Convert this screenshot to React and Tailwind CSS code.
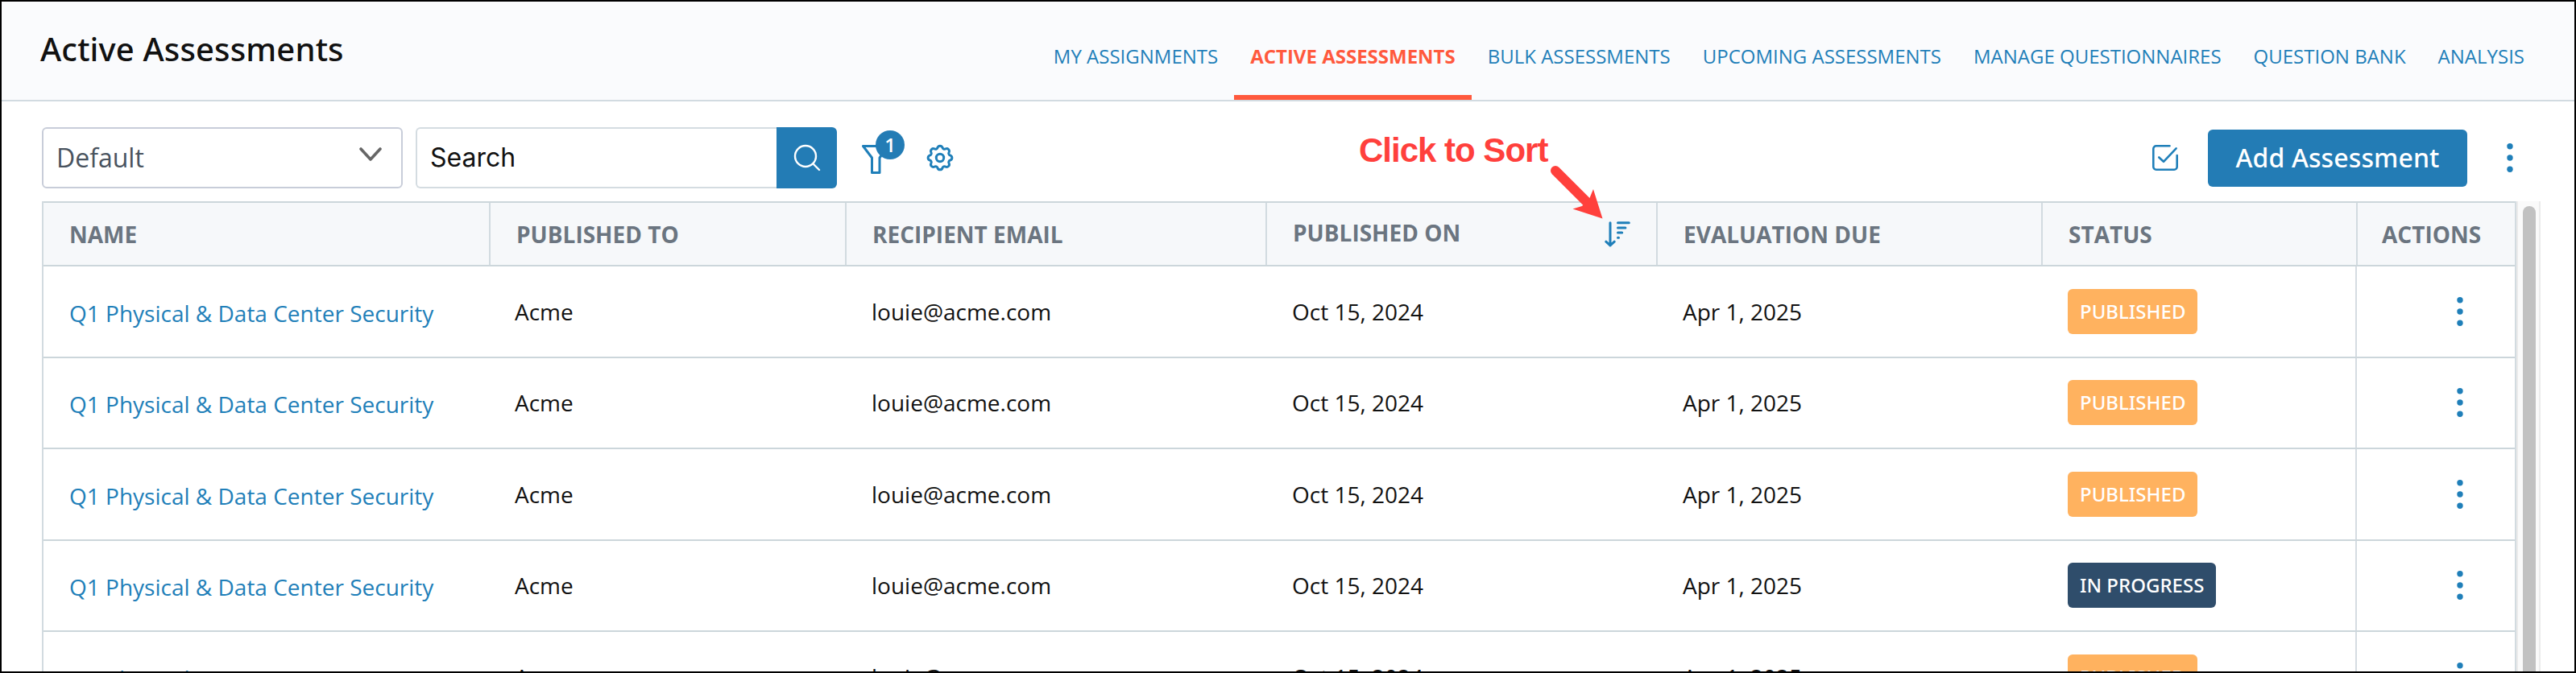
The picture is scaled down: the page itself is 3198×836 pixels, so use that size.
const TABS = [
  "My Assignments",
  "Active Assessments",
  "Bulk Assessments",
  "Upcoming Assessments",
  "Manage Questionnaires",
  "Question Bank",
  "Analysis",
];

const STATUS_STYLES = {
  Published: "bg-[#ffb25f]",
  "In Progress": "bg-[#2f4d6b]",
};

const row = (id, status) => ({
  id,
  name: "Q1 Physical & Data Center Security",
  publishedTo: "Acme",
  email: "louie@acme.com",
  publishedOn: "Oct 15, 2024",
  due: "Apr 1, 2025",
  status,
});

const ROWS = [
  row(1, "Published"),
  row(2, "Published"),
  row(3, "Published"),
  row(4, "In Progress"),
  row(5, "Published"),
];

const GRID =
  "grid grid-cols-[555px_442px_522px_485px_478px_391px_195px]";

// Open Sans has no medium weight installed, Noto Sans has
const MEDIUM = "font-['Noto_Sans',sans-serif] font-medium";

// Outline of a gear with eight rounded teeth, centred on 18,18
function gearPath() {
  const at = (deg) => {
    const a = (deg * Math.PI) / 180;
    return `${(18 + 13.2 * Math.cos(a)).toFixed(2)} ${(18 + 13.2 * Math.sin(a)).toFixed(2)}`;
  };
  let d = `M${at(-13)}`;
  for (let k = 0; k < 8; k++) {
    d += `A3.2 3.2 0 0 1 ${at(k * 45 + 13)}A2.6 2.6 0 0 0 ${at(k * 45 + 32)}`;
  }
  return d + "Z";
}

function Kebab() {
  return (
    <svg className="w-2 h-9 shrink-0" viewBox="0 0 8 36" fill="#1f7fb9">
      <circle cx="4" cy="3.8" r="3.7" />
      <circle cx="4" cy="18" r="3.7" />
      <circle cx="4" cy="32.2" r="3.7" />
    </svg>
  );
}

function SortIcon() {
  return (
    <svg
      className="w-8 h-8"
      viewBox="0 0 32 32"
      fill="none"
      stroke="#1f7fb9"
      strokeWidth="3"
      strokeLinecap="round"
      strokeLinejoin="round"
    >
      <path d="M7 1.7V30M1.8 25.2L7 30l5.2-4.8M16.5 1.7h13.8M16.5 7.9h9.4M16.5 14.1h5.2M16.5 20.3h1" />
    </svg>
  );
}

function Header() {
  return (
    <header className="flex justify-between h-[124px] bg-[#fafbfd] border-b-2 border-[#d2dbe1] pl-12 pr-[42px]">
      <h1
        className={`mt-[31px] text-[40px] leading-[56px] tracking-[0.15px] text-[#111] ${MEDIUM}`}
      >
        Active Assessments
      </h1>
      <nav className="flex text-2xl">
        {TABS.map((tab) => (
          <a
            key={tab}
            className={
              tab === "Active Assessments"
                ? "px-5 pt-[52px] uppercase font-bold text-[#ff593d] border-b-6 border-[#ff593d]"
                : "px-5 pt-[52px] uppercase text-[#1f7fb9]"
            }
          >
            {tab}
          </a>
        ))}
      </nav>
    </header>
  );
}

function Toolbar() {
  return (
    <div className="flex items-center h-[76px] mt-8 pl-[50px] pr-[76px]">
      <div className="flex items-center justify-between w-[448px] h-[76px] border-2 border-[#c8cdd9] rounded-md pl-4 pr-6 text-[32px] text-[#49535e]">
        Default
        <svg
          className="w-7 h-5 mb-2"
          viewBox="0 0 28 20"
          fill="none"
          stroke="#666"
          strokeWidth="3.6"
          strokeLinecap="round"
          strokeLinejoin="round"
        >
          <path d="M2 3l12 13L26 3" />
        </svg>
      </div>

      <div className="flex w-[523px] h-[76px] ml-4">
        <div className="flex items-center grow border-2 border-r-0 border-[#d4dce1] rounded-l-md pl-4 font-['Inter',sans-serif] text-[32px] text-[#111]">
          Search
        </div>
        <div className="grid place-items-center w-[75px] bg-[#237cb5] rounded-r-md">
          <svg
            className="w-9 h-9"
            viewBox="0 0 36 36"
            fill="none"
            stroke="white"
            strokeWidth="2.4"
            strokeLinecap="round"
          >
            <circle cx="16" cy="16" r="13" />
            <path d="M25.5 25.5L33 33" />
          </svg>
        </div>
      </div>

      <div className="relative ml-[31px] mt-1">
        <svg
          className="w-9 h-9"
          viewBox="0 0 36 36"
          fill="none"
          stroke="#1f7fb9"
          strokeWidth="3"
          strokeLinejoin="round"
        >
          <path d="M1.5 1.5h31L22 16v18.5H12.5V16z" />
        </svg>
        <span className="absolute left-[17px] -top-[18px] grid place-items-center size-9 rounded-full bg-[#237cb5] text-2xl leading-none font-semibold text-white">
          1
        </span>
      </div>

      <svg
        className="w-9 h-9 ml-[43px]"
        viewBox="0 0 36 36"
        fill="none"
        stroke="#1f7fb9"
        strokeWidth="3"
        strokeLinejoin="round"
      >
        <path d={gearPath()} />
        <circle cx="18" cy="18" r="4.7" />
      </svg>

      <div className="flex items-center ml-auto">
        <svg
          className="w-8 h-8"
          viewBox="0 0 32 32"
          fill="none"
          stroke="#1f7fb9"
          strokeWidth="2.6"
          strokeLinecap="round"
          strokeLinejoin="round"
        >
          <path d="M21.5 1.3H4.8A3.5 3.5 0 0 0 1.3 4.8v22.4a3.5 3.5 0 0 0 3.5 3.5h22.4a3.5 3.5 0 0 0 3.5-3.5V13M8.3 15.5l5.7 5.3L29.6 4.3" />
        </svg>
        <button
          className={`ml-[37px] w-[322px] h-[71px] rounded-md bg-[#237cb5] text-[32px] tracking-[0.1px] text-white ${MEDIUM}`}
        >
          Add Assessment
        </button>
        <div className="ml-[49px]">
          <Kebab />
        </div>
      </div>
    </div>
  );
}

const HEAD = "flex items-center pl-8 border-r-2 border-[#d2dbe0]";

function Table() {
  return (
    <div className="flex mt-4 ml-[50px] h-[584px] overflow-hidden">
      <div className="w-[3072px] border-l-2 border-r-2 border-[#d2dbe0]">
        <div
          className={`${GRID} h-[81px] border-y-2 border-[#ccd6db] bg-[#f6f8fa] text-[28px] font-bold text-[#6b7580]`}
        >
          <div className={HEAD}>NAME</div>
          <div className={HEAD}>PUBLISHED TO</div>
          <div className={HEAD}>RECIPIENT EMAIL</div>
          <div className={`${HEAD} justify-between pr-8`}>
            <span className="pb-1">PUBLISHED ON</span>
            <SortIcon />
          </div>
          <div className={HEAD}>EVALUATION DUE</div>
          <div className={HEAD}>STATUS</div>
          <div className="flex items-center pl-[30px]">ACTIONS</div>
        </div>

        {ROWS.map((r) => (
          <div
            key={r.id}
            className={`${GRID} items-center h-[113.5px] border-b-2 border-[#ccd6db] text-[28px] text-[#111]`}
          >
            <a className="pl-8 pt-1 text-[#1f7fb9]">{r.name}</a>
            <div className="pl-[30px]">{r.publishedTo}</div>
            <div className="pl-[31px]">{r.email}</div>
            <div className="pl-[31px]">{r.publishedOn}</div>
            <div className="pl-[31px]">{r.due}</div>
            <div className="pl-[31px]">
              <span
                className={`inline-flex items-center h-14 px-[15px] rounded-md text-2xl uppercase text-white ${MEDIUM} ${STATUS_STYLES[r.status]}`}
              >
                {r.status}
              </span>
            </div>
            <div className="flex items-center justify-end self-stretch -ml-[3px] pr-16 border-l-2 border-[#d5dce2]">
              <Kebab />
            </div>
          </div>
        ))}
      </div>

      <div className="w-[30px] bg-[#fafafa] border-x-2 border-[#ebebeb] pt-1.5 pl-1.5">
        <div className="w-4 h-full rounded-t-full bg-[#c1c1c1]" />
      </div>
    </div>
  );
}

// Red label and arrow that point at the sort icon
function SortCallout() {
  return (
    <div className="absolute left-[1685px] top-[160px]">
      <span className="block whitespace-nowrap font-['Liberation_Sans',Arial,sans-serif] text-[42px] leading-[50px] tracking-[-1px] font-bold text-[#ff403c]">
        Click to Sort
      </span>
      <svg
        className="absolute left-[235px] top-[42px] w-[70px] h-[70px]"
        viewBox="0 0 70 70"
        fill="#ff403c"
      >
        <path d="M9 8L48 47" stroke="#ff403c" strokeWidth="12" strokeLinecap="round" />
        <path d="M67.5 67.5L56 31L51 43L42 52L30.5 55.500Z" />
      </svg>
    </div>
  );
}

export default function App() {
  return (
    <div className="relative w-[3198px] h-[836px] overflow-hidden bg-white border-2 border-black font-['Open_Sans',sans-serif]">
      <Header />
      <Toolbar />
      <Table />
      <SortCallout />
    </div>
  );
}
